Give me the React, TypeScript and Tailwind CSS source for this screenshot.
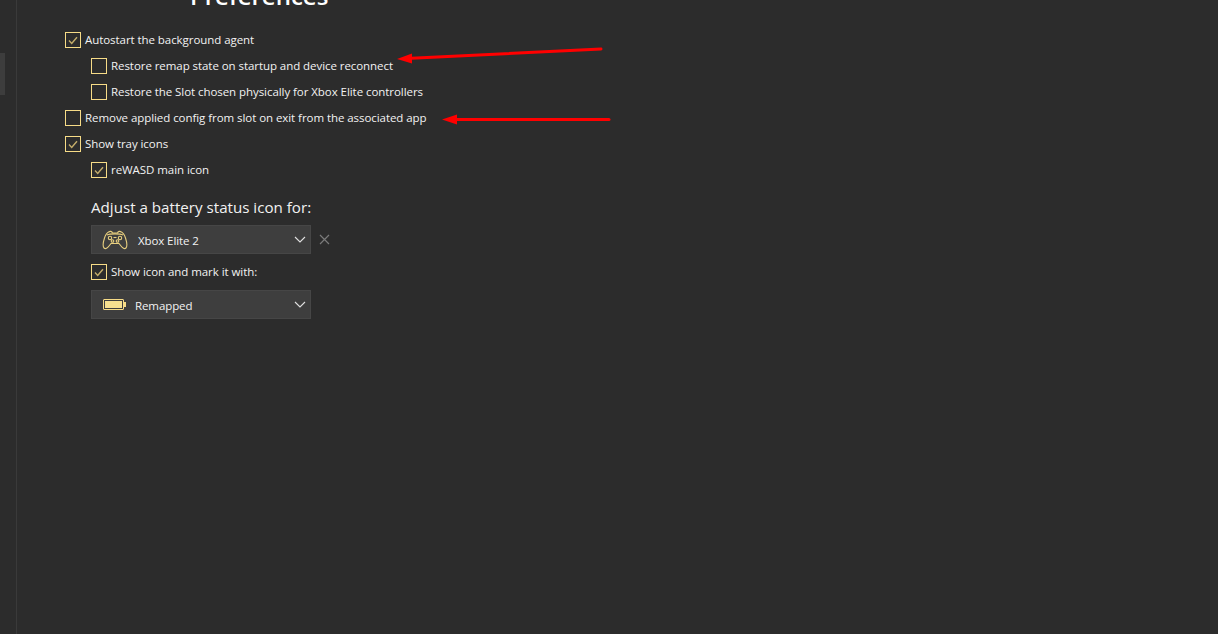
import React from "react";

const CheckRow = ({ label, checked, nested }: { label: string; checked?: boolean; nested?: boolean }) => (
  <div className={`flex items-center h-[26px] ${nested ? "pl-[26px]" : ""}`}>
    <span className="w-4 h-4 border border-[#f7dc87] flex items-center justify-center shrink-0">
      {checked && (
        <svg width="10" height="9" viewBox="0 0 10 9" fill="none" stroke="#c4ad6a" strokeWidth="1.4">
          <path d="M1 4.6 L3.7 7.4 L9 1.2" />
        </svg>
      )}
    </span>
    <span className="ml-1 text-[11.5px] tracking-[-0.06px] leading-none text-[#f2f2f2] whitespace-nowrap">{label}</span>
  </div>
);

const GamepadIcon = () => (
  <svg width="26" height="20" viewBox="0 0 26 20" fill="none" stroke="#e8cf7f" strokeWidth="1.1" className="shrink-0">
    <path d="M6.5 2 C8 1 10 1 10.5 3 H15.5 C16 1 18 1 19.5 2 C21.5 3 22.5 5 23.5 8 C25 12.5 25.5 16 24 18 C22.5 19.5 20.5 18 19 16 L17 13.5 H9 L7 16 C5.5 18 3.5 19.5 2 18 C0.5 16 1 12.5 2.5 8 C3.5 5 4.5 3 6.5 2 Z" />
    <path d="M5 5 C8 3.5 18 3.5 21 5" />
    <circle cx="8" cy="8" r="1.7" />
    <circle cx="18" cy="8" r="1.7" />
    <circle cx="10.5" cy="11" r="1.3" />
    <circle cx="15.5" cy="11" r="1.3" />
    <path d="M11.5 7.5 H14.5" />
  </svg>
);

const BatteryIcon = () => (
  <span className="flex items-center shrink-0">
    <span className="w-[21px] h-[11px] border border-[#f7dc87] p-px rounded-[1px] flex">
      <span className="flex-1 bg-[#f7e08f]" />
    </span>
    <span className="w-[2px] h-[5px] bg-[#f7dc87]" />
  </span>
);

const Chevron = () => (
  <svg width="12" height="7" viewBox="0 0 12 7" fill="none" stroke="#e0e0e0" strokeWidth="1.1" className="ml-auto shrink-0">
    <path d="M1 1 L6 6 L11 1" />
  </svg>
);

const Select = ({ icon, label, gap, pad }: { icon: React.ReactNode; label: string; gap: string; pad: string }) => (
  <div className={`w-[220px] h-[29px] bg-[#3e3e3e] border border-[#464646] flex items-center pr-[4px] ${pad}`}>
    {icon}
    <span className={`${gap} pt-[2px] text-[11.5px] tracking-[-0.1px] leading-none text-[#f2f2f2]`}>{label}</span>
    <Chevron />
  </div>
);

const App = () => {
  return (
    <div
      className="relative flex w-[1218px] h-[634px] overflow-hidden bg-[#2c2c2c]"
      style={{ fontFamily: '"Open Sans", "Noto Sans", sans-serif' }}
    >
      <aside className="w-[17px] h-full border-r border-[#3a3a3a] pt-[53px] shrink-0">
        <div className="w-[5px] h-[42px] bg-[#3d3d3d]" />
      </aside>

      <main className="flex-1 pl-[48px]">
        <h1 className="ml-[125px] -mt-[16px] h-[27px] text-[24px] leading-[24px] font-semibold text-white">
          Preferences
        </h1>
        <div className="mt-[16px]">
          <CheckRow label="Autostart the background agent" checked />
          <CheckRow label="Restore remap state on startup and device reconnect" nested />
          <CheckRow label="Restore the Slot chosen physically for Xbox Elite controllers" nested />
          <CheckRow label="Remove applied config from slot on exit from the associated app" />
          <CheckRow label="Show tray icons" checked />
          <CheckRow label="reWASD main icon" checked nested />
        </div>
        <div className="pl-[26px]">
          <p className="mt-[14px] text-[15.15px] leading-[20px] text-[#f2f2f2]">Adjust a battery status icon for:</p>
          <div className="mt-[8px] flex items-center">
            <Select icon={<GamepadIcon />} label="Xbox Elite 2" gap="ml-[10px]" pad="pl-[10px]" />
            <svg width="11" height="11" viewBox="0 0 11 11" fill="none" stroke="#7a7a7a" strokeWidth="1.2" className="ml-[8px]">
              <path d="M1 1 L10 10 M10 1 L1 10" />
            </svg>
          </div>
          <div className="-ml-[26px] mt-[5px]">
            <CheckRow label="Show icon and mark it with:" checked nested />
          </div>
          <div className="mt-[5px]">
            <Select icon={<BatteryIcon />} label="Remapped" gap="ml-[9px]" pad="pl-[11px]" />
          </div>
        </div>
      </main>

      {/* red annotation arrows */}
      <svg className="absolute left-[390px] top-[40px]" width="230" height="90" viewBox="0 0 230 90" fill="none">
        <path d="M16 18.5 L211 9" stroke="#ff0000" strokeWidth="3" strokeLinecap="round" />
        <path d="M7 19 L22 13.5 L22 23.5 Z" fill="#ff0000" />
        <path d="M62 79.5 H219" stroke="#ff0000" strokeWidth="3" strokeLinecap="round" />
        <path d="M52 79.5 L67 74.5 L67 84.5 Z" fill="#ff0000" />
      </svg>
    </div>
  );
};

export default App;
